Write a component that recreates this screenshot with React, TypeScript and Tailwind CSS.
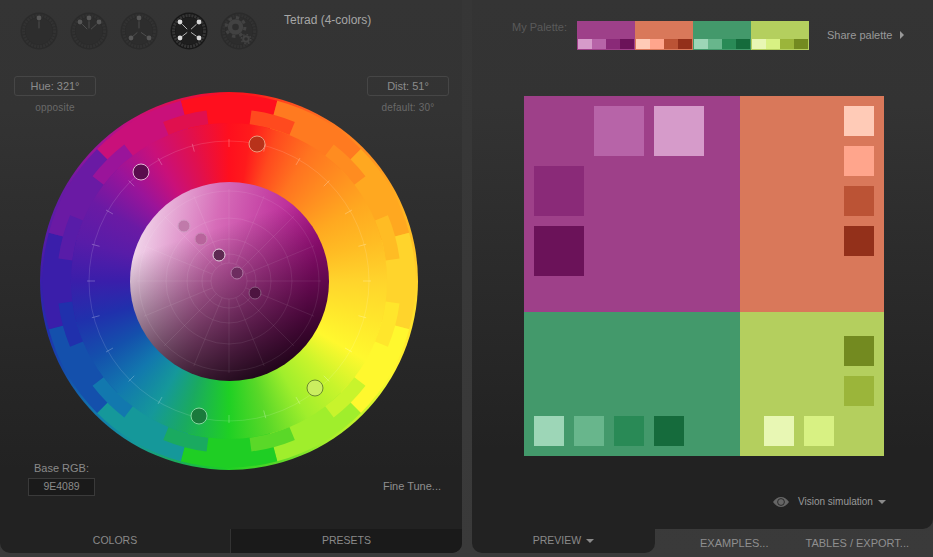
const CX = 189;
const CY = 189;

const BLOCKS = ["#ff0f1e", "#ff7a20", "#ffa820", "#ffd42c", "#fff82e", "#a0ee2c", "#1fce24", "#15989a", "#1450ac", "#3a1eaa", "#6a1aa4", "#c9107a"];
const TEETH = ["#ff4a1e", "#ff8c20", "#ffbc24", "#ffe62c", "#c8f42c", "#5ad828", "#1aaa60", "#1278ae", "#2030ac", "#581ca8", "#9a149a", "#e0104e"];

const INNER_DOTS = [
  { x: 184, y: 226, fill: "#c07aaa", stroke: "#d09cc4" },
  { x: 201, y: 239, fill: "#b8649c", stroke: "#c888b4" },
  { x: 219, y: 255, fill: "#5e2a52", stroke: "#e6cfe0" },
  { x: 237, y: 273, fill: "#6e2c60", stroke: "#b078a4" },
  { x: 255, y: 293, fill: "#4d1440", stroke: "#8a5a80" },
];

const OUTER_DOTS = [
  { x: 141, y: 172, fill: "#5a0c4d", stroke: "#e6b8d8" },
  { x: 257, y: 144, fill: "#b8321a", stroke: "#ee9a7c" },
  { x: 199, y: 416, fill: "#1a7a3c", stroke: "#86d8a0" },
  { x: 315, y: 388, fill: "#cbee60", stroke: "#6b8a2e" },
];

const SWATCHES = [
  { main: "#9e4089", tints: ["#d69bca", "#b764a8", "#8a2a78", "#6b1259"] },
  { main: "#d9785a", tints: ["#ffcbb7", "#ffa58c", "#bb5335", "#93301a"] },
  { main: "#43996b", tints: ["#9dd6b7", "#68b68c", "#298a56", "#156b3c"] },
  { main: "#b4cf5e", tints: ["#e8f7b4", "#d8f183", "#9bb53a", "#738a20"] },
];

function polar(r: number, deg: number) {
  const a = ((deg - 90) * Math.PI) / 180;
  return [CX + r * Math.cos(a), CY + r * Math.sin(a)];
}

function wedge(r1: number, r2: number, from: number, to: number) {
  const [ax, ay] = polar(r2, from);
  const [bx, by] = polar(r2, to);
  const [cx, cy] = polar(r1, to);
  const [dx, dy] = polar(r1, from);
  return `M${ax} ${ay}A${r2} ${r2} 0 0 1 ${bx} ${by}L${cx} ${cy}A${r1} ${r1} 0 0 0 ${dx} ${dy}Z`;
}

function Dial({ angles, active, gear }: { angles?: { x: number; y: number }[]; active?: boolean; gear?: boolean }) {
  const ink = active ? "#d8d8d8" : "#575757";
  return (
    <svg width="38" height="38" viewBox="0 0 38 38" className="shrink-0">
      <circle cx="19" cy="19" r="18.5" fill={active ? "#181818" : "#2b2b2b"} />
      <circle cx="19" cy="19" r="15.5" fill="none" stroke={active ? "#353535" : "#323232"} strokeWidth="3" strokeDasharray="2.1 0.9" />
      <circle cx="19" cy="19" r="13.5" fill={active ? "#1e1e1e" : "#2d2d2d"} />
      {angles?.map((p) => {
        const dx = p.x - 19;
        const dy = p.y - 19;
        return (
          <g key={`${p.x}-${p.y}`}>
            <line x1={19 + dx * 0.2} y1={19 + dy * 0.2} x2={19 + dx * 0.75} y2={19 + dy * 0.75} stroke={ink} strokeWidth="0.8" />
            <circle cx={p.x} cy={p.y} r="2.4" fill={ink} />
          </g>
        );
      })}
      {gear && (
        <g fill="none" stroke="#424242">
          <circle cx="15.5" cy="15" r="5.5" strokeWidth="4.4" />
          <circle cx="15.5" cy="15" r="9.4" strokeWidth="3" strokeDasharray="3.4 3.98" />
          <circle cx="26" cy="27" r="2.8" strokeWidth="2" />
          <circle cx="26" cy="27" r="4.6" strokeWidth="1.6" strokeDasharray="1.6 2" />
        </g>
      )}
    </svg>
  );
}

function Caret() {
  return <span className="ml-[5px] inline-block h-0 w-0 border-x-[4px] border-t-[4px] border-x-transparent border-t-[#8a8a8a]" />;
}

function Wheel() {
  const ticks = Array.from({ length: 24 }, (_, i) => i * 15);
  const spokes = Array.from({ length: 16 }, (_, i) => i * 22.5);
  return (
    <div className="relative ml-[40px] h-[378px] w-[378px] rounded-full bg-[conic-gradient(#ff0f1e_0deg,#ff1a1c_8deg,#ff4a1e_18deg,#ff7420_32deg,#ff8c20_45deg,#ffa820_60deg,#ffbc24_75deg,#ffd42c_90deg,#ffe62c_105deg,#fff82e_120deg,#c8f42c_135deg,#a0ee2c_150deg,#5ad828_165deg,#1fd024_180deg,#1aaa60_197deg,#15989a_210deg,#1278ae_225deg,#1450ac_240deg,#2030ac_255deg,#3a1eaa_270deg,#581ca8_285deg,#6a1aa4_300deg,#9a149a_315deg,#c9107a_330deg,#e0104e_345deg,#ff0f1e_360deg)]">
      <svg viewBox="0 0 378 378" className="absolute inset-0 h-full w-full">
        {BLOCKS.map((color, i) => (
          <path key={color} d={wedge(158, 186.5, i * 30 - 15, i * 30 + 15)} fill={color} />
        ))}
        {TEETH.map((color, i) => (
          <path key={color} d={wedge(158, 172, i * 30 + 7.5, i * 30 + 22.5)} fill={color} />
        ))}
        <circle cx={CX} cy={CY} r="140" fill="none" stroke="#ffffff" strokeOpacity="0.13" />
        {ticks.map((deg) => {
          const [x1, y1] = polar(134, deg);
          const [x2, y2] = polar(142, deg);
          return <line key={deg} x1={x1} y1={y1} x2={x2} y2={y2} stroke="#ffffff" strokeOpacity="0.25" />;
        })}
      </svg>
      <div className="absolute left-[90px] top-[90px] h-[199px] w-[199px] rounded-full bg-[linear-gradient(162deg,rgba(0,0,0,0)_28%,rgba(0,0,0,0.4)_58%,rgba(0,0,0,0.97)_100%),linear-gradient(100deg,#f6eaf4_0%,#d66cb8_40%,#b0108c_85%)]" />
      <svg viewBox="0 0 378 378" className="absolute inset-0 h-full w-full">
        <g fill="none" stroke="#ffffff" strokeOpacity="0.08">
          {[18, 27, 42, 63, 90].map((r) => (
            <circle key={r} cx={CX} cy={CY} r={r} />
          ))}
          {spokes.map((deg) => {
            const [x1, y1] = polar(18, deg);
            const [x2, y2] = polar(92, deg);
            return <line key={deg} x1={x1} y1={y1} x2={x2} y2={y2} />;
          })}
        </g>
        {INNER_DOTS.map((d) => (
          <circle key={d.x} cx={d.x - 40} cy={d.y - 92} r="6" fill={d.fill} stroke={d.stroke} />
        ))}
        {OUTER_DOTS.map((d) => (
          <circle key={d.x} cx={d.x - 40} cy={d.y - 92} r="8" fill={d.fill} stroke={d.stroke} />
        ))}
      </svg>
    </div>
  );
}

function ColorsPanel() {
  return (
    <div className="flex w-[462px] flex-col overflow-hidden rounded-b-[10px] bg-[linear-gradient(#343434_0%,#333333_20%,#222222_85%)]">
      <div className="flex h-[76px] items-start gap-[12px] pl-[20px] pt-[12px]">
        <Dial angles={[{ x: 19, y: 6 }]} />
        <Dial angles={[{ x: 10, y: 10 }, { x: 19, y: 6 }, { x: 29, y: 10 }]} />
        <Dial angles={[{ x: 19, y: 6 }, { x: 11, y: 26 }, { x: 29, y: 26 }]} />
        <Dial active angles={[{ x: 10, y: 10 }, { x: 29, y: 10 }, { x: 10, y: 26 }, { x: 29, y: 26 }]} />
        <Dial gear />
        <span className="ml-[14px] mt-[1px] text-[12px] leading-[14px] text-[#a6a6a6]">Tetrad (4-colors)</span>
      </div>

      <div className="flex items-start justify-between pl-[14px] pr-[13px]">
        <div className="flex w-[82px] flex-col items-center">
          <div className="flex h-[20px] w-full items-center justify-center rounded-[3px] border border-[#464646] text-[11px] text-[#8c8c8c]">Hue: 321°</div>
          <span className="mt-[6px] text-[10px] leading-[12px] tracking-[0.2px] text-[#696969]">opposite</span>
        </div>
        <div className="flex w-[82px] flex-col items-center">
          <div className="flex h-[20px] w-full items-center justify-center rounded-[3px] border border-[#464646] text-[11px] text-[#8c8c8c]">Dist: 51°</div>
          <span className="mt-[6px] text-[10px] leading-[12px] tracking-[0.2px] text-[#696969]">default: 30°</span>
        </div>
      </div>

      <div className="-mt-[22px]">
        <Wheel />
      </div>

      <div className="-mt-[8px] flex items-end justify-between pl-[28px] pr-[21px]">
        <div className="flex w-[67px] flex-col items-center">
          <span className="text-[11px] leading-[13px] text-[#8a8a8a]">Base RGB:</span>
          <div className="mt-[3px] flex h-[18px] w-full items-center justify-center border border-[#3a3a3a] bg-[#1a1a1a] text-[10.5px] text-[#8a8a8a]">9E4089</div>
        </div>
        <span className="mb-[3px] text-[11px] leading-[13px] text-[#8f8f8f]">Fine Tune...</span>
      </div>

      <div className="mt-auto flex h-[24px]">
        <div className="flex w-[231px] items-center justify-center border-r border-[#333333] text-[10.5px] text-[#8a8a8a]">COLORS</div>
        <div className="flex flex-1 items-center justify-center bg-[#1a1a1a] text-[10.5px] text-[#8a8a8a]">PRESETS</div>
      </div>
    </div>
  );
}

function Palette() {
  return (
    <div className="flex h-[29px] w-[232px]">
      {SWATCHES.map((s) => (
        <div key={s.main} className="flex w-[58px] flex-col" style={{ backgroundColor: s.main }}>
          <div className="h-[18px]" />
          <div className="mx-px flex h-[10px]">
            {s.tints.map((t) => (
              <div key={t} className="flex-1" style={{ backgroundColor: t }} />
            ))}
          </div>
        </div>
      ))}
    </div>
  );
}

function Preview() {
  return (
    <div className="grid h-[360px] w-[360px] grid-cols-[216px_144px] grid-rows-[216px_144px]">
      <div className="grid grid-cols-[50px_50px_50px] grid-rows-[50px_50px_50px] gap-[10px] bg-[#9e4089] p-[10px]">
        <div />
        <div className="bg-[#b764a8]" />
        <div className="bg-[#d69bca]" />
        <div className="bg-[#8a2a78]" />
        <div />
        <div />
        <div className="bg-[#6b1259]" />
      </div>
      <div className="flex flex-col items-end gap-[10px] bg-[#d9785a] p-[10px]">
        <div className="h-[30px] w-[30px] bg-[#ffcbb7]" />
        <div className="h-[30px] w-[30px] bg-[#ffa58c]" />
        <div className="h-[30px] w-[30px] bg-[#bb5335]" />
        <div className="h-[30px] w-[30px] bg-[#93301a]" />
      </div>
      <div className="flex items-end gap-[10px] bg-[#43996b] p-[10px]">
        <div className="h-[30px] w-[30px] bg-[#9dd6b7]" />
        <div className="h-[30px] w-[30px] bg-[#68b68c]" />
        <div className="h-[30px] w-[30px] bg-[#298a56]" />
        <div className="h-[30px] w-[30px] bg-[#156b3c]" />
      </div>
      <div className="grid grid-cols-[30px_30px_30px] grid-rows-[30px_30px_30px] content-end justify-end gap-[10px] bg-[#b4cf5e] p-[10px]">
        <div />
        <div />
        <div className="bg-[#738a20]" />
        <div />
        <div />
        <div className="bg-[#9bb53a]" />
        <div className="bg-[#e8f7b4]" />
        <div className="bg-[#d8f183]" />
      </div>
    </div>
  );
}

function PreviewPanel() {
  return (
    <div className="flex w-[461px] flex-col">
      <div className="flex flex-1 flex-col rounded-br-[10px] bg-[linear-gradient(#343434_0%,#333333_20%,#222222_85%)]">
        <div className="flex h-[96px] items-start pl-[40px] pt-[21px]">
          <span className="text-[11px] leading-[13px] text-[#5a5a5a]">My Palette:</span>
          <div className="ml-[10px]">
            <Palette />
          </div>
          <span className="ml-[18px] mt-[8px] text-[11px] leading-[13px] text-[#999999]">Share palette</span>
          <span className="ml-[8px] mt-[10px] h-0 w-0 border-y-[4px] border-l-[4px] border-y-transparent border-l-[#999999]" />
        </div>
        <div className="pl-[52px]">
          <Preview />
        </div>
        <div className="mt-[40px] flex items-center pl-[301px]">
          <svg width="16" height="10" viewBox="0 0 16 10" className="shrink-0">
            <path d="M0 5C2.5 1.5 5 0 8 0s5.500 1.500 8 5c-2.500 3.500-5 5-8 5S2.500 8.500 0 5Z" fill="#666666" />
            <circle cx="8" cy="5" r="3.4" fill="none" stroke="#2a2a2a" strokeWidth="1" />
            <circle cx="8" cy="5" r="2.2" fill="#666666" />
          </svg>
          <span className="ml-[9px] text-[10px] leading-[12px] text-[#999999]">Vision simulation</span>
          <Caret />
        </div>
      </div>
      <div className="flex h-[24px]">
        <div className="flex w-[183px] items-center justify-center rounded-b-[10px] bg-[#222222] text-[10.5px] text-[#8a8a8a]">
          PREVIEW
          <Caret />
        </div>
        <span className="ml-[45px] mt-[8px] text-[11px] leading-[13px] text-[#8f8f8f]">EXAMPLES...</span>
        <span className="ml-[37px] mt-[8px] text-[11px] leading-[13px] text-[#8f8f8f]">TABLES / EXPORT...</span>
      </div>
    </div>
  );
}

export default function App() {
  return (
    <div className="flex h-[557px] w-[933px] gap-[10px] overflow-hidden bg-[linear-gradient(#363636,#3a3a3a)] pb-[4px] font-['Liberation_Sans',Arial,sans-serif]">
      <ColorsPanel />
      <PreviewPanel />
    </div>
  );
}
